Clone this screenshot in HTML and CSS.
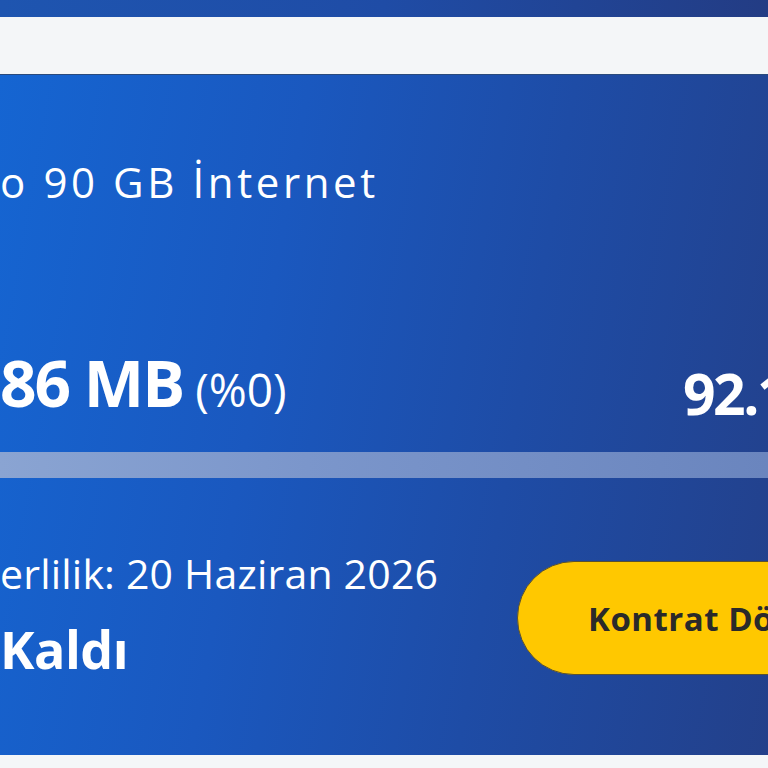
FILE: index.html
```html
<!DOCTYPE html>
<html lang="tr">
<head>
<meta charset="utf-8">
<link rel="stylesheet" href="styles.css">
</head>
<body>
<div class="page">
  <div class="topband"></div>
  <div class="strip"></div>
  <section class="card">
    <h1 class="title">o 90 GB İnternet</h1>
    <div class="usage">
      <div class="used"><span class="used-num">86 MB</span><span class="used-pct">(%0)</span></div>
      <div class="total">92.16 GB</div>
    </div>
    <div class="bar"><div class="bar-fill" style="width:0%"></div></div>
    <div class="bottom">
      <div class="validity">
        <div class="date">erlilik: 20 Haziran 2026</div>
        <div class="left">Kaldı</div>
      </div>
      <button class="btn">Kontrat Dönemini Gör</button>
    </div>
  </section>
  <div class="foot"></div>
</div>
</body>
</html>
```

FILE: styles.css
```css
html, body {
  margin: 0;
  padding: 0;
  width: 768px;
  height: 768px;
  overflow: hidden;
  background: #f4f6f8;
  font-family: "Open Sans", "Noto Sans", sans-serif;
}
.page {
  display: flex;
  flex-direction: column;
  width: 768px;
  overflow: hidden;
}
.topband {
  height: 17px;
  background: linear-gradient(90deg, #1e55b0 0%, #1f4ca6 50%, #233c84 100%);
  box-shadow: 0 1px 0 #263f6e;
}
.strip {
  height: 58px;
  background: #f4f6f8;
}
.card {
  height: 680px;
  background: linear-gradient(100deg, #1565d2 0%, #1a58bf 35%, #1e4ca6 65%, #23408a 100%);
  box-shadow: 0 -1px 0 #2a4a7c, 0 1px 0 #2f4766;
  color: #fff;
  display: flex;
  flex-direction: column;
  overflow: hidden;
}
.title {
  margin: 86px 0 0 0;
  font-size: 42px;
  letter-spacing: 3.6px;
  line-height: 1;
  font-weight: 400;
  white-space: nowrap;
}
.usage {
  margin-top: 148px;
  display: grid;
  grid-template-columns: 683px auto;
  align-items: end;
  white-space: nowrap;
}
.used {
  line-height: 1;
}
.used-num {
  font-size: 64px;
  font-weight: 700;
  letter-spacing: -2px;
  margin-right: 12px;
}
.used-pct {
  font-size: 46px;
  font-weight: 400;
}
.total {
  font-size: 57px;
  font-weight: 700;
  letter-spacing: -2.5px;
  line-height: 1;
  position: relative;
  top: 7px;
}
.bar {
  margin-top: 37px;
  height: 26px;
  background: linear-gradient(90deg, #8aa4d2 0%, #7b96cb 40%, #6a85be 100%);
}
.bar-fill {
  height: 100%;
  background: #ffc800;
}
.bottom {
  margin-top: 83px;
  display: grid;
  grid-template-columns: 517px auto;
  align-items: start;
  white-space: nowrap;
}
.date {
  font-size: 41px;
  letter-spacing: 0.2px;
  line-height: 1;
  margin-top: -8px;
}
.left {
  font-size: 52px;
  font-weight: 700;
  letter-spacing: -0.5px;
  line-height: 1;
  margin-top: 29px;
}
.btn {
  height: 114px;
  padding: 0 60px 0 70px;
  border: 1px solid #5a5230;
  border-radius: 57px;
  background: #ffc800;
  color: #2a2a2a;
  font-family: inherit;
  font-size: 33px;
  font-weight: 700;
  letter-spacing: 0.5px;
  white-space: nowrap;
  text-align: left;
}
.foot {
  flex: 1;
  background: #f4f6f8;
}
```
